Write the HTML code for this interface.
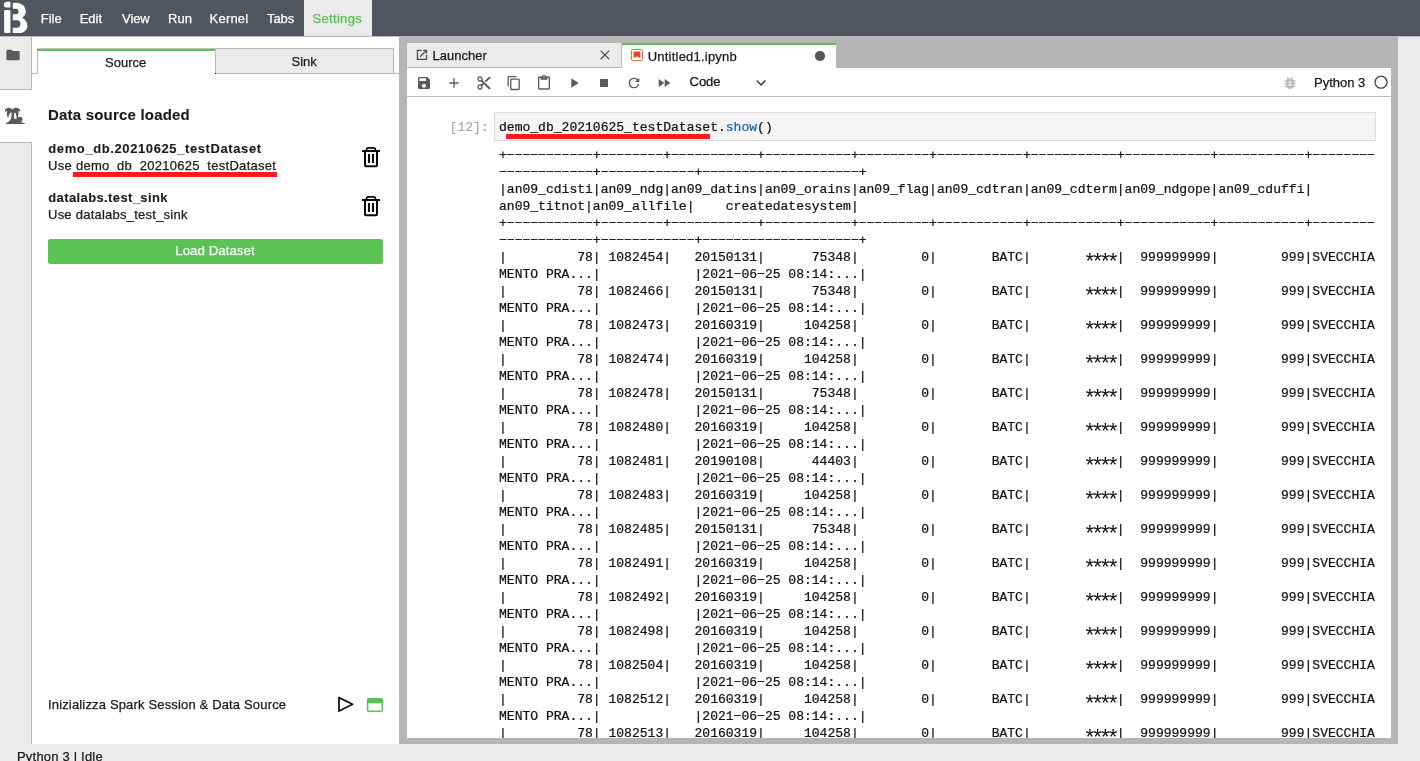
<!DOCTYPE html>
<html><head><meta charset="utf-8"><title>JupyterLab</title>
<style>
html,body{margin:0;padding:0}
body{width:1420px;height:761px;overflow:hidden;position:relative;background:#fff;font-family:"Liberation Sans",sans-serif;font-size:13px;color:#1a1a1a}
.a{position:absolute}
.t{position:absolute;white-space:pre;line-height:16px;font-size:13px;-webkit-text-stroke-width:0.25px}
.b{font-weight:bold;-webkit-text-stroke-width:0.1px}
.m{position:absolute;white-space:pre;font-family:"Liberation Mono",monospace;font-size:13.04px;line-height:17px;color:#111;left:499px;margin:0;-webkit-text-stroke-width:0.22px}
.ast{display:inline-block;width:31.3px;font-size:22px;letter-spacing:-5.45px;line-height:0;position:relative;top:8.6px;left:-2.3px;-webkit-text-stroke-width:0}
svg{position:absolute;overflow:visible}
#w{position:absolute;left:0;top:0;width:1420px;height:761px;will-change:transform}
</style></head><body><div id="w">

<div class="a" style="left:0;top:0;width:1420px;height:36px;background:#50555f"></div>
<div class="a" style="left:0;top:36px;width:1420px;height:1px;background:#bdbdbd"></div>
<div class="a" style="left:304px;top:0;width:68px;height:36px;background:#ebebeb"></div>
<div class="a" style="left:0;top:35px;width:1420px;height:1px;background:#4a4f59"></div>
<div class="a" style="left:304px;top:35px;width:68px;height:1px;background:#e2e2e2"></div>
<svg style="left:0;top:0" width="36" height="36" viewBox="0 0 36 36">
<path d="M10.4 1.8 V7.6 H7 A3.1 2.9 0 0 1 7 1.8 Z" fill="#fff"/>
<rect x="4.1" y="9.9" width="6.3" height="23.2" rx="1" fill="#fff"/>
<path d="M12.8 4.0 Q12.8 2.8 14.0 2.8 H16.5 C21.5 2.8 25.8 6.5 25.8 11.6 C25.8 14.2 24.4 16.2 22.2 17.7 C25.4 19.6 27.4 22.6 27.4 26 C27.4 30.2 23.8 33.1 19.2 33.1 H12.8 V27.7 H17.2 C19.2 27.7 20.5 26.1 20.5 24 C20.5 21.9 19.2 20.3 17.2 20.3 H12.8 V14.2 H16 C17.6 14.2 18.6 13.1 18.6 11.5 C18.6 9.9 17.6 8.75 16 8.75 H12.8 Z" fill="#fff"/>
</svg>
<span class="t" id="menu_File" style="left:40.7px;top:10.6px;color:#fff;letter-spacing:0px">File</span>
<span class="t" id="menu_Edit" style="left:79.7px;top:10.6px;color:#fff;letter-spacing:0px">Edit</span>
<span class="t" id="menu_View" style="left:122.1px;top:10.6px;color:#fff;letter-spacing:-0.1px">View</span>
<span class="t" id="menu_Run" style="left:168.1px;top:10.6px;color:#fff;letter-spacing:0px">Run</span>
<span class="t" id="menu_Kernel" style="left:209.6px;top:10.6px;color:#fff;letter-spacing:0.2px">Kernel</span>
<span class="t" id="menu_Tabs" style="left:267.1px;top:10.6px;color:#fff;letter-spacing:-0.1px">Tabs</span>
<span class="t" id="menu_Settings" style="left:312.6px;top:10.6px;color:#5bc254;letter-spacing:0.3px">Settings</span>
<div class="a" style="left:0;top:37px;width:31px;height:707px;background:#ebebeb"></div>
<div class="a" style="left:31px;top:37px;width:1px;height:707px;background:#b9b9b9"></div>
<div class="a" style="left:0;top:90px;width:32px;height:52px;background:#fff"></div>
<div class="a" style="left:0;top:89px;width:32px;height:1px;background:#b9b9b9"></div>
<div class="a" style="left:0;top:142px;width:32px;height:1px;background:#b9b9b9"></div>
<svg style="left:5px;top:47px" width="16" height="16" viewBox="0 0 24 24"><path fill="#5a5a5a" d="M10 4H4c-1.1 0-1.99.9-1.99 2L2 18c0 1.1.9 2 2 2h16c1.1 0 2-.9 2-2V8c0-1.1-.9-2-2-2h-8l-2-2z"/></svg>
<svg style="left:4px;top:106px" width="22" height="19" viewBox="0 0 22 19">
<path fill="#5a5a5a" fill-rule="evenodd" d="M2.1 17.9 L20.7 17.9 L20.7 17.0 C19 16.9 17.6 16.6 17.2 16.0 C18.2 14.8 18.9 13.4 18.4 12.2 C17.8 10.9 16 10.5 14.4 11.3 L14.0 10.8 C14.8 8.6 14.6 6.4 14.1 4.9 C14.9 4.9 15.6 5.2 16.1 5.9 C16.6 4.2 15.4 2.2 12.5 1.8 C10.8 1.7 9.4 2.4 8.4 3.6 C7.4 2.4 6 1.7 4.3 1.8 C1.6 2.1 0.6 4.2 1.15 5.9 C1.6 5.2 2.5 4.8 3.4 4.9 C2.4 6.6 2.5 9.6 4.3 11.8 C4.5 9.6 5.4 7.6 6.9 6.4 L7.6 6.2 C7.6 8.5 7.5 10.5 7.1 12.3 C6.6 14.2 5.5 15.6 2.1 17.0 Z M10.1 7.0 L11.7 7.0 L12.9 12.8 L10.1 12.8 Z"/>
</svg>
<div class="a" style="left:32px;top:73px;width:367px;height:1px;background:#b9b9b9"></div>
<div class="a" style="left:37px;top:48px;width:178px;height:26px;background:#fff;border-left:1px solid #b9b9b9;box-sizing:border-box"></div>
<div class="a" style="left:37px;top:48px;width:178px;height:1px;background:#c4bcc4"></div>
<div class="a" style="left:37px;top:49px;width:178px;height:2px;background:#5bc254"></div>
<div class="a" style="left:215px;top:48px;width:179px;height:26px;background:#ebebeb;border:1px solid #b9b9b9;box-sizing:border-box"></div>
<div class="a" style="left:215px;top:73px;width:1px;height:1px;background:#000"></div>
<span class="t" id="t_source" style="left:105px;top:54.5px">Source</span>
<span class="t" id="t_sink" style="left:291.5px;top:53.5px">Sink</span>
<span class="t b" id="t_dsl" style="left:48px;top:105.8px;font-size:15px;line-height:18px;letter-spacing:0.2px">Data source loaded</span>
<span class="t b" id="t_d1" style="left:48.3px;top:140.5px;letter-spacing:0.6px">demo_db.20210625_testDataset</span>
<span class="t" id="t_u1" style="left:48px;top:157.5px;letter-spacing:0.29px">Use demo_db_20210625_testDataset</span>
<div class="a" style="left:72.5px;top:172px;width:204px;height:4.7px;background:#fb1d1d"></div>
<span class="t b" id="t_d2" style="left:48.3px;top:189.5px;letter-spacing:0.38px">datalabs.test_sink</span>
<span class="t" id="t_u2" style="left:48px;top:206.5px;letter-spacing:0.24px">Use datalabs_test_sink</span>
<svg style="left:361px;top:146px" width="20" height="22" viewBox="0 0 20 22">
<g fill="none" stroke="#0a0a0a" stroke-width="2">
<path d="M1 5 H19"/>
<path d="M4 5.5 V19.3 Q4 20.3 5 20.3 H15 Q16 20.3 16 19.3 V5.5"/>
<path d="M5.6 4.6 V3.6 Q5.6 1.9 7.4 1.9 H12.6 Q14.4 1.9 14.4 3.6 V4.6" stroke-width="1.7"/>
<path d="M8 8.1 V17 M12 8.1 V17" stroke-width="2.1"/>
</g></svg>
<svg style="left:361px;top:195px" width="20" height="22" viewBox="0 0 20 22">
<g fill="none" stroke="#0a0a0a" stroke-width="2">
<path d="M1 5 H19"/>
<path d="M4 5.5 V19.3 Q4 20.3 5 20.3 H15 Q16 20.3 16 19.3 V5.5"/>
<path d="M5.6 4.6 V3.6 Q5.6 1.9 7.4 1.9 H12.6 Q14.4 1.9 14.4 3.6 V4.6" stroke-width="1.7"/>
<path d="M8 8.1 V17 M12 8.1 V17" stroke-width="2.1"/>
</g></svg>
<div class="a" style="left:48px;top:239px;width:335px;height:25px;background:#5bc254;border-radius:2.5px"></div>
<span class="t" id="t_load" style="left:175.3px;top:243.4px;color:#fff;font-size:13.33px">Load Dataset</span>
<span class="t" id="t_init" style="left:48px;top:696.5px;letter-spacing:0.16px">Inizializza Spark Session &amp; Data Source</span>
<svg style="left:336px;top:694px" width="20" height="20" viewBox="0 0 20 20"><path d="M3 3.6 L16.6 10.3 L3 17 Z" fill="none" stroke="#111" stroke-width="1.8" stroke-linejoin="round"/></svg>
<svg style="left:366px;top:697px" width="18" height="16" viewBox="0 0 18 16">
<rect x="1.6" y="1.7" width="14.8" height="12.6" rx="1.4" fill="#fff" stroke="#5bc254" stroke-width="1.5"/>
<path d="M1 2.6 Q1 1 2.6 1 H15.4 Q17 1 17 2.6 V6.3 H1 Z" fill="#5bc254"/></svg>
<div class="a" style="left:399px;top:37px;width:999px;height:707px;background:#b5b5b5"></div>
<div class="a" style="left:1398px;top:37px;width:22px;height:707px;background:#ebebeb"></div>
<div class="a" style="left:0;top:744px;width:1420px;height:17px;background:#ebebeb"></div>
<span class="t" id="t_status" style="left:17px;top:748.5px;letter-spacing:0.2px">Python 3 | Idle</span>
<div class="a" style="left:407px;top:68px;width:984px;height:670px;background:#fff"></div>
<div class="a" style="left:407px;top:43px;width:215px;height:25px;background:#ebebeb;border-right:1px solid #b9b9b9;border-bottom:1px solid #b9b9b9;box-sizing:border-box"></div>
<div class="a" style="left:622px;top:67px;width:769px;height:1px;background:#b9b9b9"></div>
<div class="a" style="left:622px;top:43px;width:214px;height:26px;background:#fff"></div>
<div class="a" style="left:622px;top:43px;width:214px;height:2px;background:#5bc254"></div>
<svg style="left:416px;top:49px" width="12" height="12" viewBox="0 0 12 12"><g fill="none" stroke="#4a4a4a" stroke-width="1.3"><path d="M5.7 1.45 H1.45 V10.4 H10.55 V6"/><path d="M4 7.75 L10.3 1.6"/><path d="M7.2 1.45 H10.55 V4.6"/></g><path d="M8.4 1.45 H10.55 V3.6 Z" fill="#4a4a4a"/></svg>
<span class="t" id="t_launcher" style="left:432.5px;top:47.5px">Launcher</span>
<svg style="left:600px;top:50px" width="10" height="10" viewBox="0 0 10 10"><path d="M0.6 0.6 L9.2 9.2 M9.2 0.6 L0.6 9.2" stroke="#4d4d4d" stroke-width="1.25" fill="none"/></svg>
<svg style="left:631px;top:49px" width="12" height="12" viewBox="0 0 12 12"><rect x="0.5" y="0.5" width="11" height="11" rx="1.2" fill="#fff" stroke="#ee6b3b" stroke-width="1"/><path d="M2.6 2.5 H9.4 V9.2 L6 7.2 L2.6 9.2 Z" fill="#e8461a"/></svg>
<span class="t" id="t_untitled" style="left:647.7px;top:48.5px;letter-spacing:0.22px">Untitled1.ipynb</span>
<div class="a" style="left:815.2px;top:51.3px;width:9.4px;height:9.4px;border-radius:50%;background:#555"></div>
<div class="a" style="left:407px;top:96px;width:984px;height:1px;background:#bdbdbd"></div>
<svg style="left:416.0px;top:75.0px" width="16" height="16" viewBox="0 0 24 24"><g fill="#5b5b5b"><path d="M17 3H5c-1.11 0-2 .9-2 2v14c0 1.1.89 2 2 2h14c1.1 0 2-.9 2-2V7l-4-4zm-5 16c-1.66 0-3-1.34-3-3s1.34-3 3-3 3 1.34 3 3-1.34 3-3 3zm3-10H5V5h10v4z"/></g></svg>
<svg style="left:446.0px;top:75.0px" width="16" height="16" viewBox="0 0 24 24"><g fill="#5b5b5b"><path d="M19 13h-6v6h-2v-6H5v-2h6V5h2v6h6v2z"/></g></svg>
<svg style="left:476.0px;top:75.0px" width="16" height="16" viewBox="0 0 24 24"><g fill="#5b5b5b"><path d="M9.64 7.64c.23-.5.36-1.05.36-1.64 0-2.21-1.79-4-4-4S2 3.79 2 6s1.79 4 4 4c.59 0 1.14-.13 1.64-.36L10 12l-2.36 2.36C7.14 14.13 6.59 14 6 14c-2.21 0-4 1.79-4 4s1.79 4 4 4 4-1.79 4-4c0-.59-.13-1.14-.36-1.64L12 14l7 7h3v-1L9.64 7.64zM6 8c-1.1 0-2-.89-2-2s.9-2 2-2 2 .89 2 2-.9 2-2 2zm0 12c-1.1 0-2-.89-2-2s.9-2 2-2 2 .89 2 2-.9 2-2 2zm6-7.5c-.28 0-.5-.22-.5-.5s.22-.5.5-.5.500.22.5.5-.22.5-.5.5zM19 3l-6 6 2 2 7-7V3z"/></g></svg>
<svg style="left:506.0px;top:75.0px" width="16" height="16" viewBox="0 0 18 18"><g fill="#5b5b5b"><path d="M11.9,1H3.2C2.4,1,1.7,1.7,1.700,2.500v10.200h1.500V2.500h8.700V1z M14.100,3.900h-8c-0.800,0-1.500,0.700-1.500,1.500v10.200c0,0.800,0.700,1.500,1.500,1.500h8 c0.800,0,1.500-0.700,1.500-1.500V5.400C15.500,4.600,14.900,3.900,14.100,3.900z M14.100,15.500h-8V5.400h8V15.500z"/></g></svg>
<svg style="left:536.0px;top:75.0px" width="16" height="16" viewBox="0 0 24 24"><g fill="#5b5b5b"><path d="M19 2h-4.180C14.400.84 13.300 0 12 0c-1.300 0-2.400.84-2.820 2H5c-1.100 0-2 .9-2 2v16c0 1.100.9 2 2 2h14c1.100 0 2-.9 2-2V4c0-1.100-.9-2-2-2zm-7 0c.55 0 1 .45 1 1s-.45 1-1 1-1-.45-1-1 .45-1 1-1zm7 18H5V4h2v3h10V4h2v16z"/></g></svg>
<svg style="left:566.0px;top:75.0px" width="16" height="16" viewBox="0 0 24 24"><g fill="#5b5b5b"><path d="M8 5v14l11-7z"/></g></svg>
<svg style="left:596.0px;top:75.0px" width="16" height="16" viewBox="0 0 24 24"><g fill="#5b5b5b"><path d="M6 6h12v12H6z"/></g></svg>
<svg style="left:626.0px;top:75.0px" width="16" height="16" viewBox="0 0 18 18"><g fill="#5b5b5b"><path d="M9 13.500c-2.490 0-4.500-2.010-4.500-4.500S6.510 4.500 9 4.500c1.240 0 2.360.52 3.170 1.330L10 8h5V3l-1.760 1.760C12.150 3.680 10.660 3 9 3 5.690 3 3.010 5.690 3.010 9S5.690 15 9 15c2.970 0 5.430-2.160 5.900-5h-1.520c-.46 2-2.240 3.500-4.380 3.500z"/></g></svg>
<svg style="left:656.0px;top:75.0px" width="16" height="16" viewBox="0 0 24 24"><g fill="#5b5b5b"><path d="M4 18l8.500-6L4 6v12zm9-12v12l8.500-6L13 6z"/></g></svg>
<span class="t" id="t_code" style="left:689.5px;top:73.5px;color:#111">Code</span>
<svg style="left:752px;top:74px" width="18" height="18" viewBox="0 0 18 18"><path fill="#444" d="M5.2,5.900L9,9.700l3.800-3.800l1.200,1.200l-4.900,5l-4.900-5L5.200,5.900z"/></svg>
<svg style="left:1282px;top:75px" width="16" height="16" viewBox="0 0 24 24"><path fill="#bdbdbd" d="M20 8h-2.810c-.45-.78-1.070-1.450-1.820-1.960L17 4.410 15.590 3l-2.170 2.170C12.960 5.060 12.490 5 12 5c-.49 0-.96.06-1.410.17L8.410 3 7 4.410l1.620 1.630C7.880 6.550 7.260 7.220 6.810 8H4v2h2.090c-.05.330-.9.660-.09 1v1H4v2h2v1c0 .34.040.67.090 1H4v2h2.810c1.040 1.790 2.970 3 5.190 3s4.150-1.210 5.190-3H20v-2h-2.090c.05-.33.090-.66.090-1v-1h2v-2h-2v-1c0-.34-.04-.67-.09-1H20V8zm-6 8h-4v-2h4v2zm0-4h-4v-2h4v2z"/></svg>
<span class="t" id="t_py3" style="left:1314px;top:74.5px">Python 3</span>
<svg style="left:1373px;top:74px" width="16" height="16" viewBox="0 0 16 16"><circle cx="8" cy="8.2" r="6" fill="none" stroke="#444" stroke-width="1.3"/></svg>
<div class="a" style="left:0;top:0;width:1391px;height:738px;overflow:hidden">
<div class="a" style="left:494px;top:112px;width:882px;height:29px;background:#f5f5f5;border:1px solid #dcdcdc;box-sizing:border-box"></div>
<span class="m" id="m_prompt" style="left:449.6px;top:118.5px;color:#a6a6a6;-webkit-text-stroke-width:0.15px">[12]:</span>
<span class="m" id="m_code" style="top:118.5px">demo_db_20210625_testDataset.<span style="color:#1460b0">show</span>()</span>
<div class="a" style="left:505.5px;top:134.2px;width:204.3px;height:4.5px;background:#fb1d1d"></div>
<pre class="m" style="top:146.5px">+−−−−−−−−−−−+−−−−−−−−+−−−−−−−−−−−+−−−−−−−−−−−+−−−−−−−−−+−−−−−−−−−−−+−−−−−−−−−−−+−−−−−−−−−−−+−−−−−−−−−−−+−−−−−−−−</pre>
<pre class="m" style="top:163.5px">−−−−−−−−−−−−+−−−−−−−−−−−−+−−−−−−−−−−−−−−−−−−−−+</pre>
<pre class="m" style="top:180.5px">|an09_cdisti|an09_ndg|an09_datins|an09_orains|an09_flag|an09_cdtran|an09_cdterm|an09_ndgope|an09_cduffi|</pre>
<pre class="m" style="top:197.5px">an09_titnot|an09_allfile|    createdatesystem|</pre>
<pre class="m" style="top:214.5px">+−−−−−−−−−−−+−−−−−−−−+−−−−−−−−−−−+−−−−−−−−−−−+−−−−−−−−−+−−−−−−−−−−−+−−−−−−−−−−−+−−−−−−−−−−−+−−−−−−−−−−−+−−−−−−−−</pre>
<pre class="m" style="top:231.5px">−−−−−−−−−−−−+−−−−−−−−−−−−+−−−−−−−−−−−−−−−−−−−−+</pre>
<pre class="m" style="top:248.5px">|         78| 1082454|   20150131|      75348|        0|       BATC|       <span class="ast">****</span>|  999999999|        999|SVECCHIA</pre>
<pre class="m" style="top:265.5px">MENTO PRA...|            |2021−06−25 08:14:...|</pre>
<pre class="m" style="top:282.5px">|         78| 1082466|   20150131|      75348|        0|       BATC|       <span class="ast">****</span>|  999999999|        999|SVECCHIA</pre>
<pre class="m" style="top:299.5px">MENTO PRA...|            |2021−06−25 08:14:...|</pre>
<pre class="m" style="top:316.5px">|         78| 1082473|   20160319|     104258|        0|       BATC|       <span class="ast">****</span>|  999999999|        999|SVECCHIA</pre>
<pre class="m" style="top:333.5px">MENTO PRA...|            |2021−06−25 08:14:...|</pre>
<pre class="m" style="top:350.5px">|         78| 1082474|   20160319|     104258|        0|       BATC|       <span class="ast">****</span>|  999999999|        999|SVECCHIA</pre>
<pre class="m" style="top:367.5px">MENTO PRA...|            |2021−06−25 08:14:...|</pre>
<pre class="m" style="top:384.5px">|         78| 1082478|   20150131|      75348|        0|       BATC|       <span class="ast">****</span>|  999999999|        999|SVECCHIA</pre>
<pre class="m" style="top:401.5px">MENTO PRA...|            |2021−06−25 08:14:...|</pre>
<pre class="m" style="top:418.5px">|         78| 1082480|   20160319|     104258|        0|       BATC|       <span class="ast">****</span>|  999999999|        999|SVECCHIA</pre>
<pre class="m" style="top:435.5px">MENTO PRA...|            |2021−06−25 08:14:...|</pre>
<pre class="m" style="top:452.5px">|         78| 1082481|   20190108|      44403|        0|       BATC|       <span class="ast">****</span>|  999999999|        999|SVECCHIA</pre>
<pre class="m" style="top:469.5px">MENTO PRA...|            |2021−06−25 08:14:...|</pre>
<pre class="m" style="top:486.5px">|         78| 1082483|   20160319|     104258|        0|       BATC|       <span class="ast">****</span>|  999999999|        999|SVECCHIA</pre>
<pre class="m" style="top:503.5px">MENTO PRA...|            |2021−06−25 08:14:...|</pre>
<pre class="m" style="top:520.5px">|         78| 1082485|   20150131|      75348|        0|       BATC|       <span class="ast">****</span>|  999999999|        999|SVECCHIA</pre>
<pre class="m" style="top:537.5px">MENTO PRA...|            |2021−06−25 08:14:...|</pre>
<pre class="m" style="top:554.5px">|         78| 1082491|   20160319|     104258|        0|       BATC|       <span class="ast">****</span>|  999999999|        999|SVECCHIA</pre>
<pre class="m" style="top:571.5px">MENTO PRA...|            |2021−06−25 08:14:...|</pre>
<pre class="m" style="top:588.5px">|         78| 1082492|   20160319|     104258|        0|       BATC|       <span class="ast">****</span>|  999999999|        999|SVECCHIA</pre>
<pre class="m" style="top:605.5px">MENTO PRA...|            |2021−06−25 08:14:...|</pre>
<pre class="m" style="top:622.5px">|         78| 1082498|   20160319|     104258|        0|       BATC|       <span class="ast">****</span>|  999999999|        999|SVECCHIA</pre>
<pre class="m" style="top:639.5px">MENTO PRA...|            |2021−06−25 08:14:...|</pre>
<pre class="m" style="top:656.5px">|         78| 1082504|   20160319|     104258|        0|       BATC|       <span class="ast">****</span>|  999999999|        999|SVECCHIA</pre>
<pre class="m" style="top:673.5px">MENTO PRA...|            |2021−06−25 08:14:...|</pre>
<pre class="m" style="top:690.5px">|         78| 1082512|   20160319|     104258|        0|       BATC|       <span class="ast">****</span>|  999999999|        999|SVECCHIA</pre>
<pre class="m" style="top:707.5px">MENTO PRA...|            |2021−06−25 08:14:...|</pre>
<pre class="m" style="top:724.5px">|         78| 1082513|   20160319|     104258|        0|       BATC|       <span class="ast">****</span>|  999999999|        999|SVECCHIA</pre>
</div>
</div></body></html>
